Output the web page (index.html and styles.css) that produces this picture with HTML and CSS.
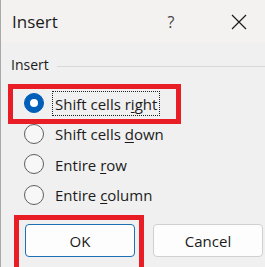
FILE: index.html
```html
<!DOCTYPE html>
<html>
<head>
<meta charset="utf-8">
<link rel="stylesheet" href="styles.css">
</head>
<body>
<div class="dialog">
  <div class="titlebar">
    <span class="title">Insert</span>
    <span class="help">?</span>
    <span class="close">
      <svg width="16" height="16" viewBox="0 0 16 16"><path d="M1 1 L15 15 M15 1 L1 15" stroke="#1b1b1b" stroke-width="1.2" fill="none"/></svg>
    </span>
  </div>
  <div class="content">
    <div class="group-label"><span>Insert</span><span class="rule"></span></div>
    <div class="options">
      <div class="option selected">
        <span class="radio on"></span>
        <span class="label focus">Shift cells r<u>i</u>ght</span>
        <span class="highlight h1"></span>
      </div>
      <div class="option">
        <span class="radio"></span>
        <span class="label">Shift cells <u>d</u>own</span>
      </div>
      <div class="option">
        <span class="radio"></span>
        <span class="label">Entire <u>r</u>ow</span>
      </div>
      <div class="option">
        <span class="radio"></span>
        <span class="label">Entire <u>c</u>olumn</span>
      </div>
    </div>
    <div class="buttons">
      <div class="btn-wrap">
        <button class="btn primary">OK</button>
        <span class="highlight h2"></span>
      </div>
      <button class="btn">Cancel</button>
    </div>
  </div>
</div>
</body>
</html>
```
FILE: styles.css
```css
html, body {
  margin: 0;
  padding: 0;
  background: #f0f0f0;
}
body {
  font-family: "Open Sans", "Noto Sans", sans-serif;
  color: #1b1b1b;
  width: 265px;
  height: 267px;
  overflow: hidden;
}
.dialog {
  width: 264px;
  height: 267px;
  border-left: 1px solid #a8a8a8;
  background: #f0f0f0;
  display: flex;
  flex-direction: column;
  overflow: hidden;
}
.titlebar {
  height: 43px;
  flex: none;
  background: #f4f2f0;
  display: flex;
  align-items: center;
  padding-left: 11px;
  box-sizing: border-box;
}
.title {
  font-size: 17px;
  flex: 1;
  line-height: 1;
  padding-bottom: 1px;
}
.help {
  font-size: 16px;
  color: #444;
  width: 20px;
  text-align: center;
  margin-right: 50px;
  line-height: 1;
}
.close {
  width: 16px;
  height: 16px;
  margin-right: 18px;
  display: flex;
}
.content {
  padding: 12px 0 0 10px;
  flex: 1;
  display: flex;
  flex-direction: column;
}
.group-label {
  display: flex;
  align-items: center;
  font-size: 14px;
  line-height: 20px;
  gap: 8px;
}
.rule {
  flex: 1;
  height: 1px;
  background: #d8d8d8;
  margin-top: 2px;
}
.options {
  display: flex;
  flex-direction: column;
  margin-top: 13px;
}
.option {
  position: relative;
  height: 30.5px;
  display: flex;
  align-items: center;
  padding-left: 13px;
  gap: 11px;
  font-size: 15px;
}
.radio {
  width: 20px;
  height: 20px;
  flex: none;
  box-sizing: border-box;
  border: 1px solid #5e5e5e;
  border-radius: 50%;
  background: #f7f7f7;
  display: flex;
  align-items: center;
  justify-content: center;
}
.radio.on {
  background: #005fb8;
  border-color: #005fb8;
}
.radio.on::after {
  content: "";
  width: 8px;
  height: 8px;
  border-radius: 50%;
  background: #fff;
}
.label {
  line-height: 20px;
  padding: 2px 2px 1px 2px;
  margin-left: -3px;
  border: 1px dotted transparent;
}
.label.focus {
  border-color: #222;
}
.label u {
  text-decoration-thickness: 1px;
  text-underline-offset: 2px;
}
.highlight {
  position: absolute;
  border: 5px solid #e81d25;
  pointer-events: none;
}
.h1 {
  left: -3px;
  top: -4px;
  width: 163px;
  height: 30px;
}
.buttons {
  display: flex;
  gap: 18px;
  margin-top: 14px;
  padding-left: 14px;
}
.btn-wrap {
  position: relative;
  display: flex;
}
.btn {
  width: 110px;
  height: 33px;
  box-sizing: border-box;
  border: 1px solid #d0d0d0;
  border-radius: 4px;
  background: #fdfdfd;
  font-family: "Open Sans", "Noto Sans", sans-serif;
  font-size: 15px;
  color: #1b1b1b;
  padding: 0;
}
.btn.primary {
  border-color: #1f6fb8;
}
.h2 {
  left: -11px;
  top: -9px;
  width: 120px;
  height: 47px;
  border-bottom: 0;
}
```
